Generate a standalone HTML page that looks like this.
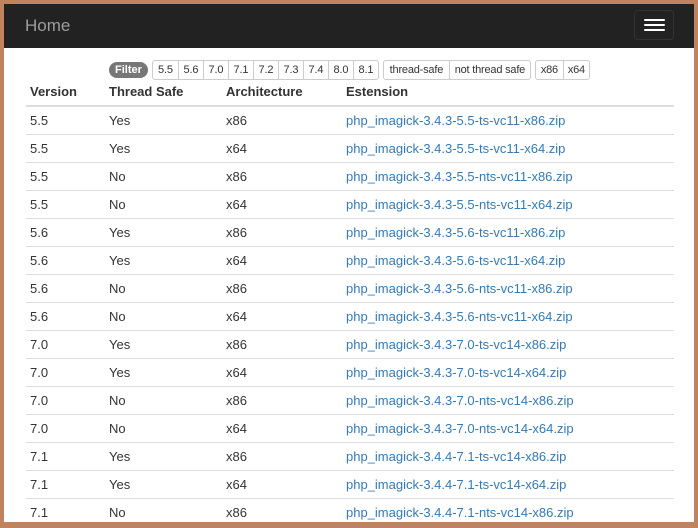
<!DOCTYPE html>
<html><head><style>
html,body{margin:0;padding:0}
body{width:698px;height:528px;background:#c1825e;font-family:"Liberation Sans",sans-serif;position:relative;overflow:hidden}
.nav{position:absolute;left:4px;top:4px;width:690px;height:44px;background:#222}
.nav .brand{position:absolute;left:21px;top:12px;color:#9d9d9d;font-size:17px}
.tog{position:absolute;left:630px;top:6px;width:40px;height:30px;border:1px solid #333;border-radius:4px;box-sizing:border-box}
.tog i{position:absolute;left:9px;width:21px;height:2px;background:#fff;border-radius:1px}
.main{position:absolute;left:4px;top:48px;width:690px;height:474px;background:#fff;overflow:hidden}
.filt{position:absolute;top:12px;left:105px;display:flex;align-items:center;font-size:11px;color:#333}
.badge{background:#777;color:#fff;font-weight:bold;border-radius:9px;padding:2px 6px;margin-right:4px;font-size:11px}
.grp{display:flex;border:1px solid #ccc;border-radius:3px;margin-right:4px;height:18px}
.grp span{line-height:18px;border-left:1px solid #ccc;text-align:center;letter-spacing:-0.2px;box-sizing:border-box}
.grp span:first-child{border-left:none}
.v span{width:25px}
table{position:absolute;left:22px;top:30px;width:648px;border-collapse:collapse;font-size:13px;color:#333}
th{text-align:left;font-weight:bold;height:27px;padding:0 4px;border-bottom:2px solid #ddd}
td{height:27px;padding:0 4px;border-top:1px solid #ddd}
tr:first-child+tr td{border-top:none}
td a{color:#337ab7;text-decoration:none}
</style></head><body>
<div class="nav"><span class="brand">Home</span><div class="tog"><i style="top:8px"></i><i style="top:13px"></i><i style="top:18px"></i></div></div>
<div class="main">
<div class="filt"><span class="badge">Filter</span>
<div class="grp v"><span>5.5</span><span>5.6</span><span>7.0</span><span>7.1</span><span>7.2</span><span>7.3</span><span>7.4</span><span>8.0</span><span>8.1</span></div>
<div class="grp"><span style="width:65px">thread-safe</span><span style="width:81px">not thread safe</span></div>
<div class="grp"><span style="width:27px">x86</span><span style="width:26px">x64</span></div></div>
<table>
<tr><th style="width:71px">Version</th><th style="width:109px">Thread Safe</th><th style="width:112px">Architecture</th><th>Estension</th></tr>
<tr><td>5.5</td><td>Yes</td><td>x86</td><td><a>php_imagick-3.4.3-5.5-ts-vc11-x86.zip</a></td></tr>
<tr><td>5.5</td><td>Yes</td><td>x64</td><td><a>php_imagick-3.4.3-5.5-ts-vc11-x64.zip</a></td></tr>
<tr><td>5.5</td><td>No</td><td>x86</td><td><a>php_imagick-3.4.3-5.5-nts-vc11-x86.zip</a></td></tr>
<tr><td>5.5</td><td>No</td><td>x64</td><td><a>php_imagick-3.4.3-5.5-nts-vc11-x64.zip</a></td></tr>
<tr><td>5.6</td><td>Yes</td><td>x86</td><td><a>php_imagick-3.4.3-5.6-ts-vc11-x86.zip</a></td></tr>
<tr><td>5.6</td><td>Yes</td><td>x64</td><td><a>php_imagick-3.4.3-5.6-ts-vc11-x64.zip</a></td></tr>
<tr><td>5.6</td><td>No</td><td>x86</td><td><a>php_imagick-3.4.3-5.6-nts-vc11-x86.zip</a></td></tr>
<tr><td>5.6</td><td>No</td><td>x64</td><td><a>php_imagick-3.4.3-5.6-nts-vc11-x64.zip</a></td></tr>
<tr><td>7.0</td><td>Yes</td><td>x86</td><td><a>php_imagick-3.4.3-7.0-ts-vc14-x86.zip</a></td></tr>
<tr><td>7.0</td><td>Yes</td><td>x64</td><td><a>php_imagick-3.4.3-7.0-ts-vc14-x64.zip</a></td></tr>
<tr><td>7.0</td><td>No</td><td>x86</td><td><a>php_imagick-3.4.3-7.0-nts-vc14-x86.zip</a></td></tr>
<tr><td>7.0</td><td>No</td><td>x64</td><td><a>php_imagick-3.4.3-7.0-nts-vc14-x64.zip</a></td></tr>
<tr><td>7.1</td><td>Yes</td><td>x86</td><td><a>php_imagick-3.4.4-7.1-ts-vc14-x86.zip</a></td></tr>
<tr><td>7.1</td><td>Yes</td><td>x64</td><td><a>php_imagick-3.4.4-7.1-ts-vc14-x64.zip</a></td></tr>
<tr><td>7.1</td><td>No</td><td>x86</td><td><a>php_imagick-3.4.4-7.1-nts-vc14-x86.zip</a></td></tr>
</table>
</div>
</body></html>
